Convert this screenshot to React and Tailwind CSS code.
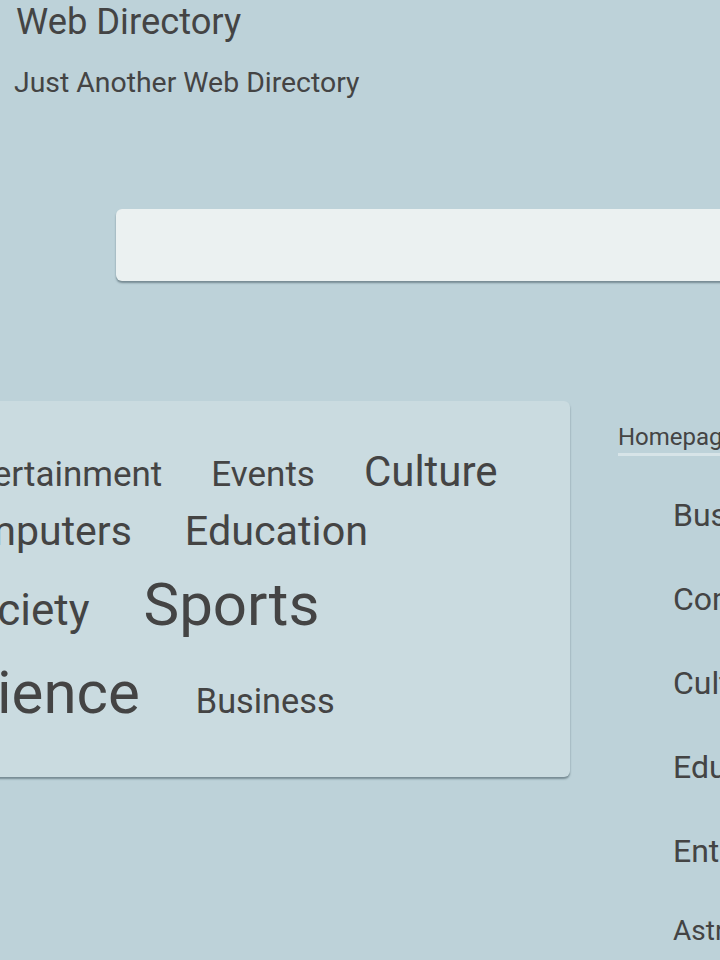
import React from 'react';

// Tag cloud rows, each word with its own weight (font size)
const cloudRows = [
  { h: 'h-[60px]', shift: '-ml-[8px] gap-x-[49px]', words: [['Entertainment', 'text-[35px]'], ['Events', 'text-[35px]'], ['Culture', 'text-[42px]']] },
  { h: 'h-[64px]', shift: '-ml-[20px] gap-x-[53px]', words: [['Computers', 'text-[41px]'], ['Education', 'text-[41.3px]']] },
  { h: 'h-[88px]', shift: '-ml-[4px] gap-x-[54px]', words: [['Society', 'text-[44px]'], ['Sports', 'text-[60px]']] },
  { h: 'h-[70px]', shift: '-ml-[20px] gap-x-[56px]', words: [['Science', 'text-[60px]'], ['Business', 'text-[34.3px]']] },
];

const categories = ['Business', 'Computers', 'Culture', 'Education', 'Entertainment'];

const App = () => {
  return (
    <div
      className="w-[720px] h-[960px] overflow-hidden bg-[#bdd2d9] text-[#444]"
      style={{ fontFamily: 'Roboto, "Open Sans", sans-serif' }}
    >
      {/* Header */}
      <header className="pl-4 pt-[4px]">
        <h1 className="text-[36.3px] leading-none font-normal">Web Directory</h1>
        <p className="mt-[29px] -ml-[2px] text-[28.4px] leading-none">Just Another Web Directory</p>
      </header>

      {/* Search bar */}
      <div className="mt-[111px] ml-[116px] w-[700px] h-[72px] rounded-[6px] bg-[#ebf1f1] shadow-[0_2px_2px_rgba(60,80,90,0.55)]" />

      {/* Main area */}
      <div className="mt-[120px] flex items-start">
        {/* Tag cloud card */}
        <div className="-ml-[80px] w-[650px] h-[376px] shrink-0 rounded-[6px] bg-[#cadbe0] shadow-[0_2px_2px_rgba(60,80,90,0.55)] pt-[50px] pl-[30px]">
          {cloudRows.map((row, i) => (
            <div key={i} className={`${row.h} ${row.shift} flex items-baseline whitespace-nowrap`}>
              {row.words.map(([word, size]) => (
                <span key={word} className={`${size} leading-none`}>{word}</span>
              ))}
            </div>
          ))}
        </div>

        {/* Sidebar */}
        <aside className="ml-[48px] pt-[24px] w-[300px] shrink-0">
          <div className="pb-[4px] border-b-[3px] border-[#d7e4e8] text-[24px] leading-none whitespace-nowrap">
            Homepage
          </div>
          <ul className="mt-[17px] pl-[55px]">
            {categories.map((c) => (
              <li key={c} className="text-[32px] leading-[84px] whitespace-nowrap">{c}</li>
            ))}
            <li className="mt-[8px] text-[28px] leading-[60px] whitespace-nowrap">Astronomy</li>
          </ul>
        </aside>
      </div>
    </div>
  );
};

export default App;
